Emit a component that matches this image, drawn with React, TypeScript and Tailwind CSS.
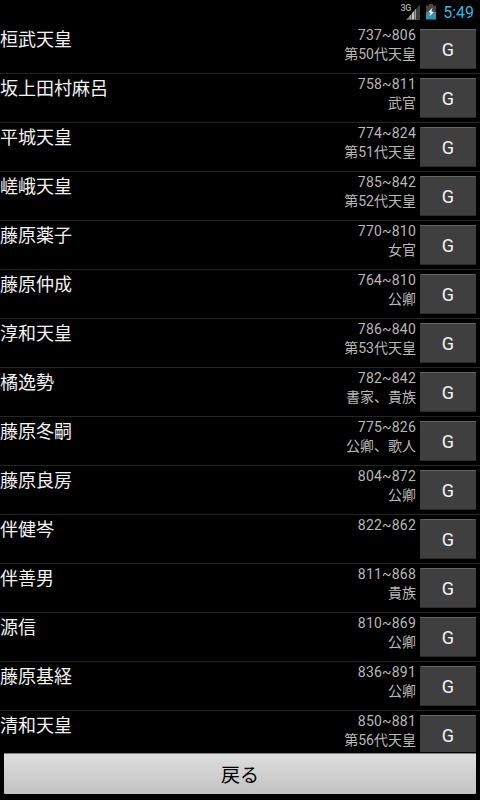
interface Person {
  name: string;
  years: string;
  role: string;
}

const people: Person[] = [
  { name: '桓武天皇', years: '737~806', role: '第50代天皇' },
  { name: '坂上田村麻呂', years: '758~811', role: '武官' },
  { name: '平城天皇', years: '774~824', role: '第51代天皇' },
  { name: '嵯峨天皇', years: '785~842', role: '第52代天皇' },
  { name: '藤原薬子', years: '770~810', role: '女官' },
  { name: '藤原仲成', years: '764~810', role: '公卿' },
  { name: '淳和天皇', years: '786~840', role: '第53代天皇' },
  { name: '橘逸勢', years: '782~842', role: '書家、貴族' },
  { name: '藤原冬嗣', years: '775~826', role: '公卿、歌人' },
  { name: '藤原良房', years: '804~872', role: '公卿' },
  { name: '伴健岑', years: '822~862', role: '' },
  { name: '伴善男', years: '811~868', role: '貴族' },
  { name: '源信', years: '810~869', role: '公卿' },
  { name: '藤原基経', years: '836~891', role: '公卿' },
  { name: '清和天皇', years: '850~881', role: '第56代天皇' },
];

function SignalIcon() {
  return (
    <svg width="14" height="16" viewBox="0 0 14 16">
      <path d="M0 16L14 0.5V16z" fill="#3d3d3d" />
      <path d="M0.6 15.5L2.6 13.2V15.5z" fill="#a0a0a0" />
      <path d="M3.2 15.5V12.6L5.4 10V15.5z" fill="#a0a0a0" />
      <path d="M6 15.5V9.4L8 7V15.5z" fill="#c4c4c4" />
      <path d="M8.6 15.5V6.4L10 4.8V15.5z" fill="#a0a0a0" />
    </svg>
  );
}

function BatteryIcon() {
  return (
    <svg width="10" height="16" viewBox="0 0 10 16">
      <path d="M3 0h4v1.5h3V8H0V1.5h3z" fill="#454545" />
      <path d="M0 8h10v7.5H0z" fill="#2f93b8" />
      <path d="M6.6 3.6L2.4 7.8l2.2 1L3.4 12.4l4.4-4.4-2.4-.8z" fill="#f2f2f2" />
    </svg>
  );
}

function StatusBar() {
  return (
    <header className="flex h-[25px] shrink-0 items-start justify-end pr-[6px]">
      <span className="mt-[3px] mr-[-5px] text-[9px] leading-[10px] font-medium tracking-[-0.3px] text-[#a8a8a8]">3G</span>
      <div className="mt-1 mr-[6px]">
        <SignalIcon />
      </div>
      <div className="mt-1 mr-[7px]">
        <BatteryIcon />
      </div>
      <span className="text-[16px] leading-[25px] text-[#33b5e5]">5:49</span>
    </header>
  );
}

function PersonRow({ name, years, role }: Person) {
  return (
    <li className="flex h-[49px] shrink-0 border-b border-[#252525] pr-1">
      <span className="flex-1 pt-px text-[18px] leading-[27px] text-[#f3f3f3]">{name}</span>
      <div className="mr-1 text-right text-[14px] leading-[19px] text-[#b8b8b8]">
        <div className="mt-px tracking-[0.2px]">{years}</div>
        <div>{role}</div>
      </div>
      <button className="mt-1 h-10 w-14 rounded-[1px] border-t border-b border-t-[#656565] border-b-[#2c2c2c] bg-[#3f3f3f] text-[18px] leading-[39px] text-[#f3f3f3]">
        G
      </button>
    </li>
  );
}

export default function App() {
  return (
    <div className="flex h-[800px] w-[480px] flex-col overflow-hidden bg-black font-[Roboto,'Noto_Sans_CJK_JP',sans-serif]">
      <StatusBar />
      <ul className="flex h-[727px] shrink-0 flex-col overflow-hidden">
        {people.map((person) => (
          <PersonRow key={person.name} {...person} />
        ))}
      </ul>
      <button className="mx-1 mt-px h-[41px] shrink-0 rounded-[1px] border-t border-[#858585] bg-linear-to-b from-[#dedede] to-[#c2c2c2] pt-1 text-[19px] text-black">
        戻る
      </button>
    </div>
  );
}
